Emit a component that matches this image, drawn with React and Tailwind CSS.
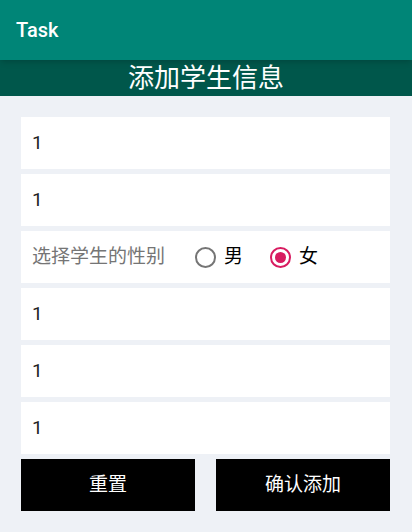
import React, { useState } from 'react';

const font = { fontFamily: 'Roboto, "Noto Sans CJK SC", sans-serif' };

function Field({ value }) {
  return (
    <div className="h-[52px] bg-white flex items-center pl-[11px] text-[19px] text-[#212121]">
      {value}
    </div>
  );
}

function Radio({ checked, label, onClick }) {
  return (
    <div className="flex items-center cursor-pointer" onClick={onClick}>
      <div
        className={`w-[21px] h-[21px] rounded-full border-2 flex items-center justify-center ${
          checked ? 'border-[#D81B60]' : 'border-[#757575]'
        }`}
      >
        {checked && <div className="w-[11px] h-[11px] rounded-full bg-[#D81B60]" />}
      </div>
      <span className="ml-[8px] text-[19px] text-black">{label}</span>
    </div>
  );
}

export default function App() {
  const [gender, setGender] = useState('female');

  return (
    <div className="w-[412px] h-[532px] bg-[#EEF1F6] flex flex-col" style={font}>
      {/* app bar */}
      <div className="h-[60px] bg-[#008577] flex items-center pl-[16px] shadow-md z-10">
        <span className="text-white text-[20px] font-medium">Task</span>
      </div>
      {/* page title */}
      <div className="h-[36px] bg-[#00574B] flex items-center justify-center">
        <span className="text-white text-[26px] leading-none">添加学生信息</span>
      </div>

      <div className="flex flex-col gap-[5px] pt-[21px] pl-[21px] pr-[22px]">
        <Field value="1" />
        <Field value="1" />
        <div className="h-[52px] bg-white flex items-center pl-[11px]">
          <span className="text-[19px] text-[#757575]">选择学生的性别</span>
          <div className="flex items-center gap-[27px] ml-[30px]">
            <Radio checked={gender === 'male'} label="男" onClick={() => setGender('male')} />
            <Radio checked={gender === 'female'} label="女" onClick={() => setGender('female')} />
          </div>
        </div>
        <Field value="1" />
        <Field value="1" />
        <Field value="1" />
        <div className="flex gap-[21px]">
          <button className="flex-1 h-[52px] bg-black text-white text-[19px]">重置</button>
          <button className="flex-1 h-[52px] bg-black text-white text-[19px]">确认添加</button>
        </div>
      </div>
    </div>
  );
}
